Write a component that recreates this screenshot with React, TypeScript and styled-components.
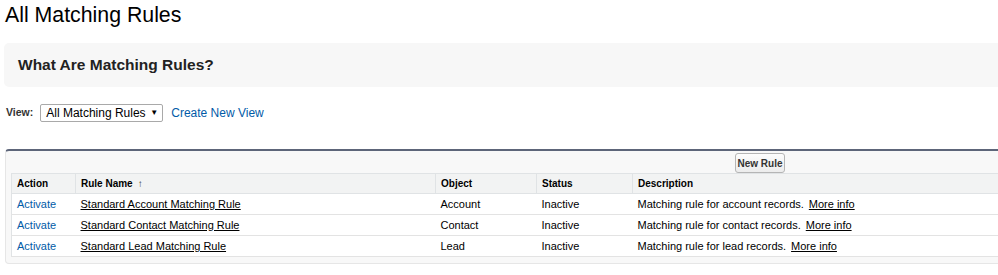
import React from "react";
import styled, { createGlobalStyle } from "styled-components";

const Global = createGlobalStyle`
  html, body { margin: 0; padding: 0; background: #fff; overflow: hidden; }
  body { font-family: Arial, "Liberation Sans", sans-serif; color: #000; }
`;

const Page = styled.div`
  width: 1012px;
  display: flex;
  flex-direction: column;
`;

const Title = styled.h1`
  margin: 0;
  padding-left: 5px;
  font-size: 21.3px;
  font-weight: normal;
  line-height: 30px;
  color: #000;
`;

const InfoPanel = styled.div`
  margin: 13px 0 0 4px;
  height: 44px;
  background: #f7f7f7;
  border-radius: 5px;
  display: flex;
  align-items: center;
  padding-left: 14px;
`;

const InfoHeading = styled.h2`
  margin: 0;
  font-size: 15.5px;
  font-weight: bold;
  color: #222;
  line-height: 20px;
`;

const ViewRow = styled.div`
  margin: 17px 0 0 6px;
  display: flex;
  align-items: center;
  height: 17px;
`;

const ViewLabel = styled.span`
  font-size: 10.5px;
  font-weight: bold;
  color: #333;
  margin-right: 7px;
  position: relative;
  top: -1px;
`;

const SelectBox = styled.div`
  box-sizing: border-box;
  width: 123px;
  height: 18px;
  border: 1px solid #a9a9a9;
  border-radius: 2px;
  background: #fff;
  display: flex;
  align-items: center;
  justify-content: space-between;
  padding: 0 4px 0 5px;
  font-size: 12px;
  color: #000;
`;

const Caret = styled.span`
  font-size: 8px;
  color: #000;
`;

const ViewLink = styled.a`
  margin-left: 8px;
  font-size: 12px;
  color: #015ba7;
  text-decoration: none;
`;

const ListPanel = styled.div`
  margin: 28px 0 0 5px;
  background: #f8f8f8;
  border: 1px solid #e6e6e6;
  border-top: 2px solid #5d6579;
  border-radius: 4px;
  padding: 0 0 6px 5px;
`;

const ButtonRow = styled.div`
  height: 22px;
  display: flex;
  align-items: center;
  padding-left: 724px;
`;

const Button = styled.button`
  box-sizing: border-box;
  height: 20px;
  width: 50px;
  padding: 0;
  font-family: Arial, "Liberation Sans", sans-serif;
  font-size: 10px;
  font-weight: bold;
  color: #333;
  background: linear-gradient(#fdfdfd, #ececec);
  border: 1px solid #b5b5b5;
  border-radius: 3px;
  margin-top: 2px;
`;

const Table = styled.table`
  border-collapse: collapse;
  width: 100%;
  background: #fff;
  border: 1px solid #e0e3e5;
  border-right: none;
`;

const Th = styled.th<{ $w?: number }>`
  ${(p) => (p.$w ? `width: ${p.$w}px;` : "")}
  box-sizing: border-box;
  text-align: left;
  font-size: 10px;
  font-weight: bold;
  color: #000;
  background: #f2f3f3;
  height: 20px;
  padding: 0 5px;
  border-left: 1px solid #e0e3e5;
  border-bottom: 1px solid #e0e3e5;
  &:first-child { border-left: none; }
`;

const SortArrow = styled.span`
  margin-left: 5px;
  font-size: 10px;
  font-weight: normal;
  color: #333;
`;

const Td = styled.td`
  font-size: 11px;
  color: #000;
  height: 20px;
  padding: 0 5px;
  border-bottom: 1px solid #e3e3e3;
  white-space: nowrap;
`;

const ActionLink = styled.a`
  color: #015ba7;
  text-decoration: none;
`;

const NameLink = styled.a`
  color: #000;
  text-decoration: underline;
`;

const MoreLink = styled.a`
  margin-left: 5px;
  color: #000;
  text-decoration: underline;
`;

const rules = [
  { name: "Standard Account Matching Rule", obj: "Account", desc: "Matching rule for account records." },
  { name: "Standard Contact Matching Rule", obj: "Contact", desc: "Matching rule for contact records." },
  { name: "Standard Lead Matching Rule", obj: "Lead", desc: "Matching rule for lead records." },
];

export default function App() {
  return (
    <Page>
      <Global />
      <Title>All Matching Rules</Title>
      <InfoPanel>
        <InfoHeading>What Are Matching Rules?</InfoHeading>
      </InfoPanel>
      <ViewRow>
        <ViewLabel>View:</ViewLabel>
        <SelectBox>
          <span>All Matching Rules</span>
          <Caret>▼</Caret>
        </SelectBox>
        <ViewLink href="#">Create New View</ViewLink>
      </ViewRow>
      <ListPanel>
        <ButtonRow>
          <Button>New Rule</Button>
        </ButtonRow>
        <Table>
          <thead>
            <tr>
              <Th $w={64}>Action</Th>
              <Th $w={360}>
                Rule Name<SortArrow>↑</SortArrow>
              </Th>
              <Th $w={101}>Object</Th>
              <Th $w={96}>Status</Th>
              <Th>Description</Th>
            </tr>
          </thead>
          <tbody>
            {rules.map((r) => (
              <tr key={r.name}>
                <Td>
                  <ActionLink href="#">Activate</ActionLink>
                </Td>
                <Td>
                  <NameLink href="#">{r.name}</NameLink>
                </Td>
                <Td>{r.obj}</Td>
                <Td>Inactive</Td>
                <Td>
                  {r.desc}
                  <MoreLink href="#">More info</MoreLink>
                </Td>
              </tr>
            ))}
          </tbody>
        </Table>
      </ListPanel>
    </Page>
  );
}
